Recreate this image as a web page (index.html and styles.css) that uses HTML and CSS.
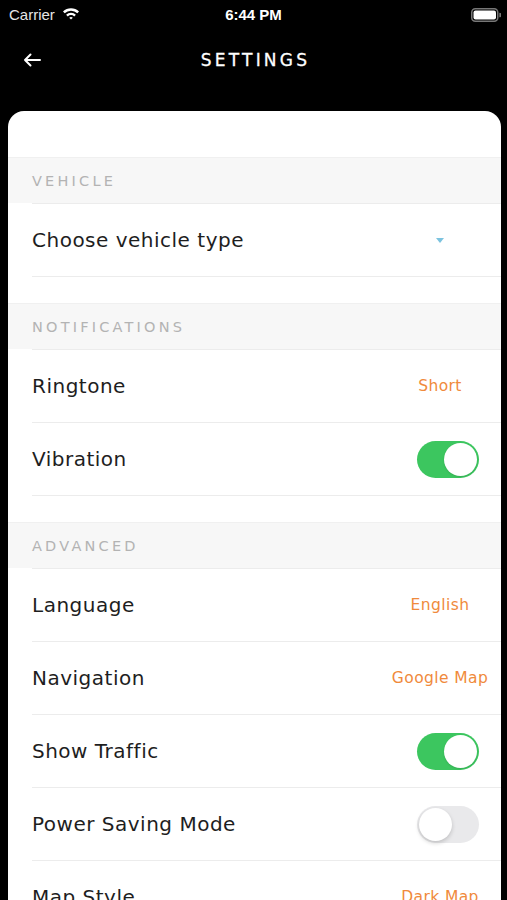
FILE: index.html
```html
<!DOCTYPE html>
<html>
<head>
<meta charset="utf-8">
<link rel="stylesheet" href="styles.css">
</head>
<body>
<div class="screen">
  <div class="status">
    <div class="status-left">
      <span class="carrier">Carrier</span>
      <svg class="wifi" width="18" height="13" viewBox="0 0 18 13">
        <path d="M1 4.6 A11.5 11.5 0 0 1 17 4.6 L15.3 6.3 A9 9 0 0 0 2.7 6.3 Z" fill="#fff"/>
        <path d="M4.1 7.7 A7 7 0 0 1 13.9 7.7 L12.2 9.4 A4.6 4.6 0 0 0 5.8 9.4 Z" fill="#fff"/>
        <path d="M7.2 10.8 A2.6 2.6 0 0 1 10.8 10.8 L9 12.6 Z" fill="#fff"/>
      </svg>
    </div>
    <div class="time">6:44 PM</div>
    <div class="status-right">
      <svg width="30" height="14" viewBox="0 0 30 14">
        <rect x="0.75" y="0.75" width="26" height="12.5" rx="3.5" fill="none" stroke="#777" stroke-width="1.5"/>
        <rect x="2.5" y="2.5" width="22.5" height="9" rx="2" fill="#fff"/>
        <path d="M28.3 4.7 A2.3 2.3 0 0 1 28.3 9.3 Z" fill="#777"/>
      </svg>
    </div>
  </div>
  <div class="nav">
    <svg class="back" width="18" height="14" viewBox="0 0 18 14">
      <path d="M17 7 H2 M7.5 1.5 L2 7 L7.5 12.5" fill="none" stroke="#fff" stroke-width="2" stroke-linecap="round" stroke-linejoin="round"/>
    </svg>
    <div class="title">SETTINGS</div>
  </div>
  <div class="card">
    <div class="spacer"></div>

    <div class="band">VEHICLE</div>
    <div class="list">
      <div class="row">
        <span class="label">Choose vehicle type</span>
        <span class="value"><span class="caret"></span></span>
      </div>
    </div>

    <div class="band">NOTIFICATIONS</div>
    <div class="list">
      <div class="row">
        <span class="label">Ringtone</span>
        <span class="value">Short</span>
      </div>
      <div class="row">
        <span class="label">Vibration</span>
        <span class="toggle on"><span class="knob"></span></span>
      </div>
    </div>

    <div class="band">ADVANCED</div>
    <div class="list">
      <div class="row">
        <span class="label">Language</span>
        <span class="value">English</span>
      </div>
      <div class="row">
        <span class="label">Navigation</span>
        <span class="value">Google Map</span>
      </div>
      <div class="row">
        <span class="label">Show Traffic</span>
        <span class="toggle on"><span class="knob"></span></span>
      </div>
      <div class="row">
        <span class="label">Power Saving Mode</span>
        <span class="toggle"><span class="knob"></span></span>
      </div>
      <div class="row">
        <span class="label">Map Style</span>
        <span class="value">Dark Map</span>
      </div>
    </div>
  </div>
</div>
</body>
</html>
```

FILE: styles.css
```css
* { box-sizing: border-box; }
html, body {
  margin: 0;
  padding: 0;
  background: #000;
}
body {
  width: 507px;
  height: 900px;
  overflow: hidden;
  font-family: "DejaVu Sans", "Noto Sans", sans-serif;
}
.screen {
  display: flex;
  flex-direction: column;
  height: 900px;
}
.status {
  height: 28px;
  display: flex;
  align-items: center;
  justify-content: space-between;
  padding: 0 6px 0 9px;
  color: #fff;
  font-family: "Liberation Sans", "Roboto", sans-serif;
  position: relative;
}
.status-left {
  display: flex;
  align-items: center;
  gap: 7px;
}
.carrier {
  font-size: 15px;
  color: #e6e6e6;
}
.wifi { margin-top: -2px; }
.time {
  position: absolute;
  left: 0;
  right: 0;
  text-align: center;
  font-size: 15px;
  font-weight: bold;
  pointer-events: none;
}
.status-right {
  display: flex;
  align-items: center;
  padding-top: 1px;
}
.nav {
  height: 64px;
  display: flex;
  align-items: center;
  padding-left: 23px;
  position: relative;
}
.back { display: block; }
.title {
  position: absolute;
  left: 0;
  right: 0;
  text-align: center;
  color: #fff;
  font-size: 17px;
  letter-spacing: 3.2px;
  padding-left: 4px;
  -webkit-text-stroke: 0.3px #fff;
}
.card {
  margin: 19px 6px 0 8px;
  flex: 1;
  background: #fff;
  border-radius: 16px 16px 0 0;
  overflow: hidden;
}
.spacer { height: 46px; }
.band {
  height: 46px;
  background: #f7f7f7;
  border-top: 1px solid #f0f0f0;
  display: flex;
  align-items: center;
  padding-left: 24px;
  font-size: 14.5px;
  letter-spacing: 3.2px;
  color: #b3b3b3;
}
.list {
  margin-left: 24px;
  border-bottom: 1px solid #ececec;
  margin-bottom: 26px;
}
.row {
  height: 73px;
  border-top: 1px solid #ececec;
  display: flex;
  align-items: center;
}
.label {
  flex: 1;
  font-size: 20px;
  letter-spacing: 0.5px;
  color: #1e1e1e;
}
.value {
  width: 122px;
  text-align: center;
  font-size: 15.5px;
  letter-spacing: 0.4px;
  color: #f08a3c;
  display: flex;
  justify-content: center;
}
.caret {
  width: 0;
  height: 0;
  border-left: 4px solid transparent;
  border-right: 4px solid transparent;
  border-top: 5px solid #7cc3df;
}
.toggle {
  width: 62px;
  height: 37px;
  border-radius: 19px;
  background: #e9e9eb;
  margin-right: 22px;
  position: relative;
}
.toggle .knob {
  position: absolute;
  top: 2px;
  left: 2px;
  width: 33px;
  height: 33px;
  border-radius: 50%;
  background: #fff;
  box-shadow: 0 2px 4px rgba(0,0,0,0.18);
}
.toggle.on { background: #3cc65f; }
.toggle.on .knob {
  left: 27px;
  box-shadow: 0 1px 2px rgba(0,0,0,0.12);
}
```
